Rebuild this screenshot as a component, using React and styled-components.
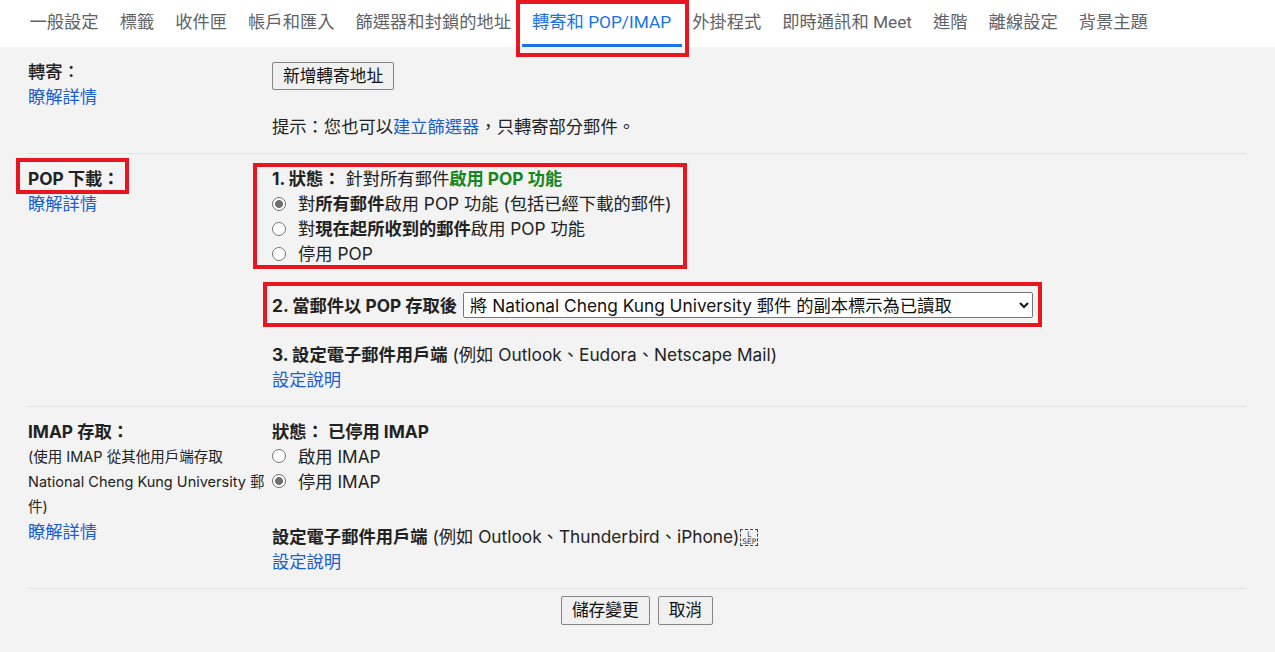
import React from 'react';
import styled, { createGlobalStyle } from 'styled-components';

const GlobalStyle = createGlobalStyle`
  html, body {
    margin: 0;
    padding: 0;
    background: #f3f3f3;
  }
  body {
    font-family: Inter, "Noto Sans CJK TC", sans-serif;
    color: #222;
  }
`;

const tabs = [
  '一般設定',
  '標籤',
  '收件匣',
  '帳戶和匯入',
  '篩選器和封鎖的地址',
  '轉寄和 POP/IMAP',
  '外掛程式',
  '即時通訊和 Meet',
  '進階',
  '離線設定',
  '背景主題',
];

const App = () => {
  return (
    <Page>
      <GlobalStyle />
      <TabBar>
        {tabs.map((t) =>
          t === '轉寄和 POP/IMAP' ? (
            <Mark key={t} $inset="0 -7px -10px -5.5px">
              <Tab $active>{t}</Tab>
            </Mark>
          ) : (
            <Tab key={t}>{t}</Tab>
          )
        )}
      </TabBar>

      <Content>
        <Section>
          <Label>
            <Heading $weight={500}>轉寄：</Heading>
            <Link>瞭解詳情</Link>
          </Label>
          <Body>
            <Button $top={3}>新增轉寄地址</Button>
            <Hint>
              提示：您也可以<Link as="span">建立篩選器</Link>，只轉寄部分郵件。
            </Hint>
          </Body>
        </Section>

        <Section>
          <Label>
            <Mark $inset="-8px -9px -3px -12px">
              <Heading>POP 下載：</Heading>
            </Mark>
            <Link>瞭解詳情</Link>
          </Label>
          <Body>
            <Mark $inset="-3px -15px -3px -19px">
              <Line>
                <b>1. 狀態：</b> 針對所有郵件<Green>啟用 POP 功能</Green>
              </Line>
              <Option checked>
                對<b>所有郵件</b>啟用 POP 功能 (包括已經下載的郵件)
              </Option>
              <Option>
                對<b>現在起所收到的郵件</b>啟用 POP 功能
              </Option>
              <Option>停用 POP</Option>
            </Mark>
            <SelectWrap>
              <Mark $inset="-10px -9px -9px -9px">
                <SelectRow>
                  <b>2. 當郵件以 POP 存取後</b>
                  <Select defaultValue="read">
                    <option value="read">
                      將 National Cheng Kung University 郵件 的副本標示為已讀取
                    </option>
                  </Select>
                </SelectRow>
              </Mark>
            </SelectWrap>
            <Line $top={23.5}>
              <b>3. 設定電子郵件用戶端</b> (例如 Outlook、Eudora、Netscape Mail)
            </Line>
            <Link>設定說明</Link>
          </Body>
        </Section>

        <Section>
          <Label>
            <Heading>IMAP 存取：</Heading>
            <Small>
              (使用 IMAP 從其他用戶端存取 National Cheng Kung University 郵件)
            </Small>
            <Link>瞭解詳情</Link>
          </Label>
          <Body>
            <Line>
              <b>狀態： 已停用 IMAP</b>
            </Line>
            <Option>啟用 IMAP</Option>
            <Option checked>停用 IMAP</Option>
            <Line $top={30}>
              <b>設定電子郵件用戶端</b> (例如 Outlook、Thunderbird、iPhone)
              <Lsep>
                <span>L</span>
                <span>SEP</span>
              </Lsep>
            </Line>
            <Link>設定說明</Link>
          </Body>
        </Section>

        <Footer>
          <Button>儲存變更</Button>
          <Button>取消</Button>
        </Footer>
      </Content>
    </Page>
  );
};

export default App;

const Option = ({ checked, children }) => (
  <OptionRow>
    <Radio type="radio" defaultChecked={checked} readOnly />
    <span>{children}</span>
  </OptionRow>
);

const Page = styled.div`
  min-height: 652px;
  background: #f3f3f3;
  font-size: 17.3px;
  line-height: 25px;
`;

const TabBar = styled.div`
  display: flex;
  height: 47px;
  padding-left: 19px;
  background: #fff;
  font-family: Roboto, "Noto Sans CJK TC", sans-serif;
`;

const Tab = styled.div`
  display: flex;
  align-items: center;
  height: 100%;
  box-sizing: border-box;
  padding: 0 10.5px 3px;
  font-size: 17.3px;
  white-space: nowrap;
  color: ${(p) => (p.$active ? '#1a73e8' : '#5f6368')};
  box-shadow: ${(p) => (p.$active ? 'inset 0 -3px 0 #1a73e8' : 'none')};
`;

const Mark = styled.div`
  position: relative;
  display: inline-block;
  vertical-align: top;

  &::after {
    content: '';
    position: absolute;
    inset: ${(p) => p.$inset};
    border: 4px solid #e8161e;
    pointer-events: none;
  }
`;

const Content = styled.div`
  margin: 0 29px 0 28px;
`;

const Section = styled.div`
  display: grid;
  grid-template-columns: 244px 1fr;
  padding: 12px 0 14px;
  border-bottom: 1px solid #e1e1e1;
`;

const Label = styled.div`
  display: flex;
  flex-direction: column;
  align-items: flex-start;
  padding-right: 4px;
`;

const Heading = styled.div`
  font-weight: ${(p) => p.$weight || 700};
  color: #222;
`;

const Link = styled.div`
  color: #1a5ed4;
  cursor: pointer;
`;

const Small = styled.div`
  font-size: 14.5px;
  line-height: 25.3px;
  color: #222;
`;

const Body = styled.div`
  display: flex;
  flex-direction: column;
  align-items: flex-start;
`;

const Line = styled.div`
  height: 25px;
  margin-top: ${(p) => p.$top || 0}px;
  white-space: nowrap;
`;

const Hint = styled.div`
  margin-top: 24px;
`;

const Green = styled.b`
  color: #17861f;
`;

const OptionRow = styled.label`
  display: flex;
  align-items: center;
  gap: 12px;
  white-space: nowrap;
`;

const Radio = styled.input`
  appearance: none;
  width: 14px;
  height: 14px;
  margin: 0;
  box-sizing: border-box;
  border: 1px solid #767676;
  border-radius: 50%;
  background: #fff;

  &:checked {
    background: radial-gradient(circle, #6f6f6f 0 3.6px, #fff 4.3px);
    border-color: #6f6f6f;
  }
`;

const SelectWrap = styled.div`
  margin-top: 26px;
`;

const SelectRow = styled.div`
  display: flex;
  align-items: center;
  gap: 6px;
  height: 26px;
  white-space: nowrap;
`;

const Select = styled.select`
  width: 570px;
  height: 26px;
  padding: 0 2px;
  font: inherit;
  font-size: 17.3px;
  color: #111;
  background: #fff;
  border: 1px solid #767676;
  border-radius: 2px;
`;

const Button = styled.button`
  margin-top: ${(p) => p.$top || 0}px;
  height: 28px;
  padding: 0 10px;
  font: inherit;
  font-size: 16.7px;
  line-height: 24px;
  color: #111;
  background: #f0f0f0;
  border: 1px solid #858585;
  border-radius: 2px;
`;

const Footer = styled.div`
  display: flex;
  justify-content: center;
  gap: 8px;
  padding-top: 7px;

  ${Button} {
    height: 29px;
  }
`;

const Lsep = styled.span`
  display: inline-flex;
  flex-direction: column;
  align-items: center;
  justify-content: center;
  width: 18px;
  height: 17px;
  margin-left: 1px;
  box-sizing: border-box;
  border: 1px dashed #444;
  font-size: 7.5px;
  line-height: 7px;
  font-family: "DejaVu Sans", sans-serif;
  vertical-align: middle;
  color: #333;
`;
